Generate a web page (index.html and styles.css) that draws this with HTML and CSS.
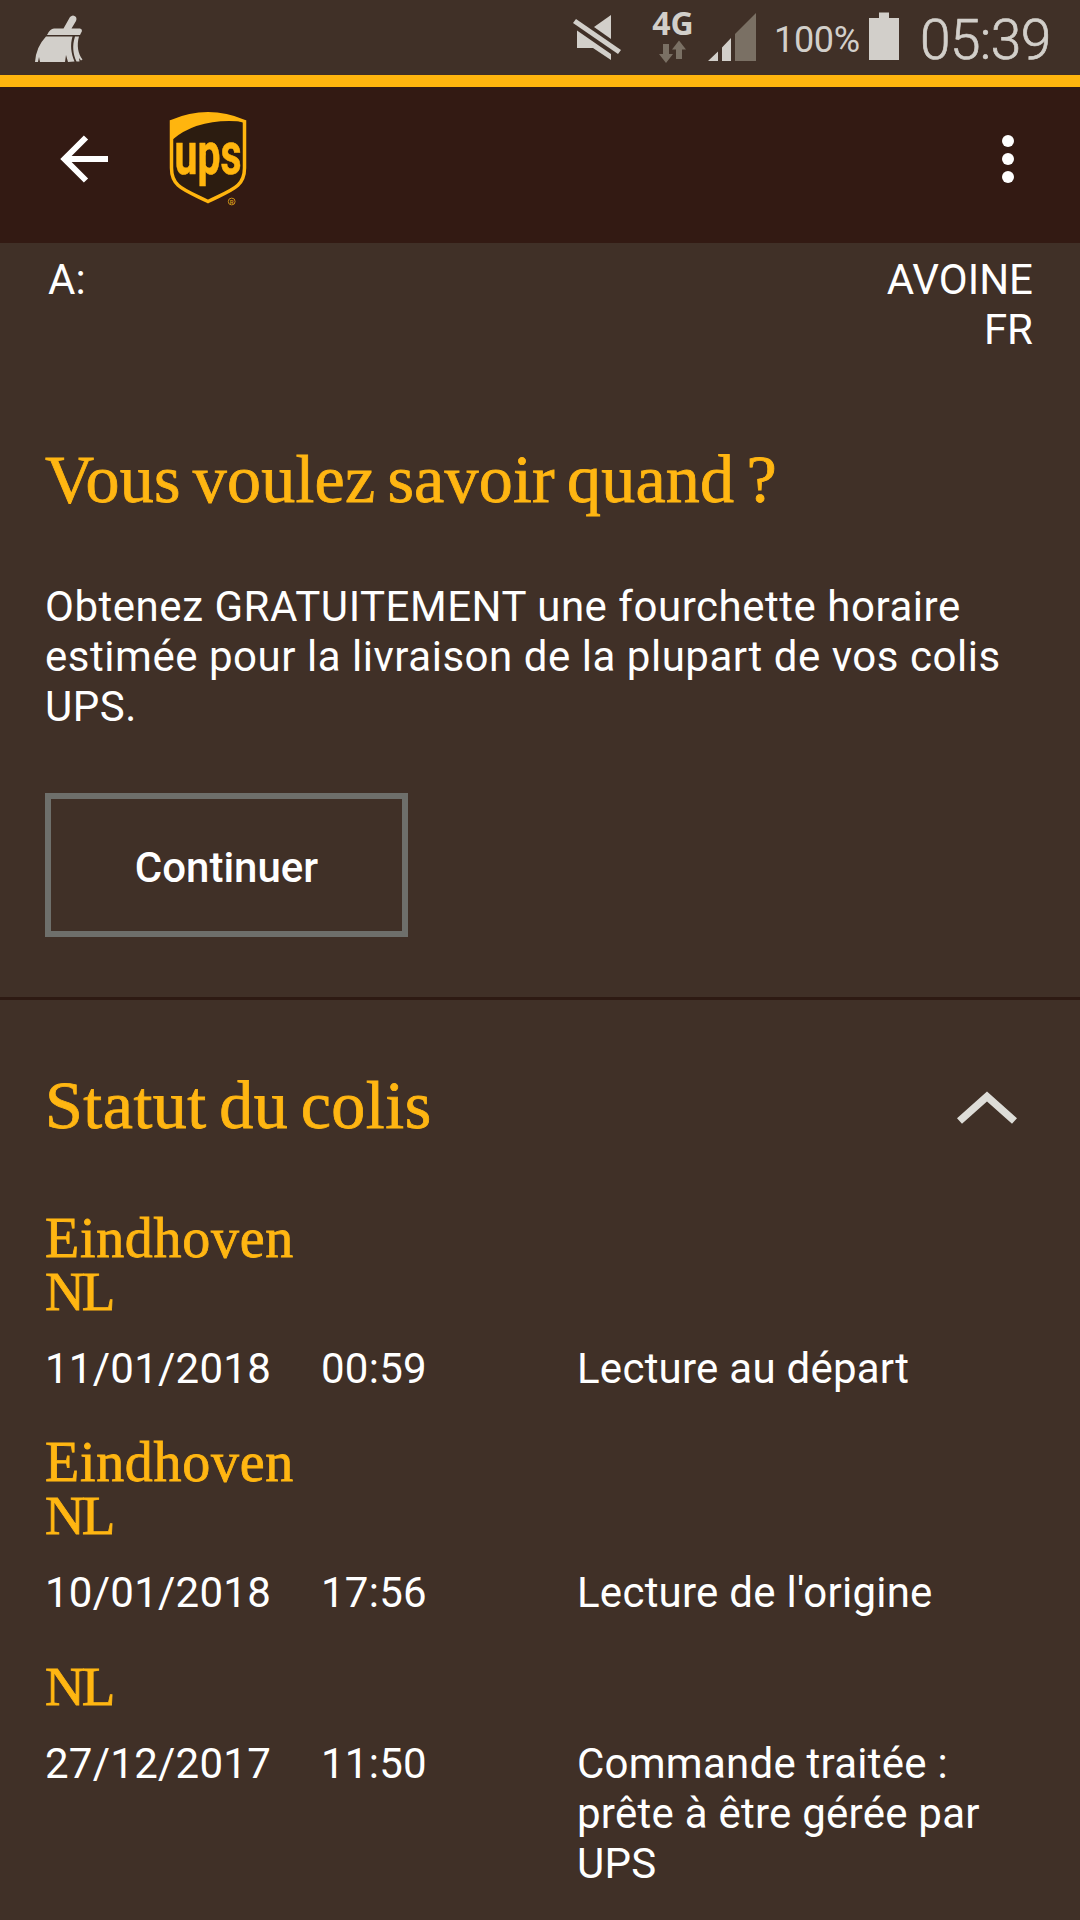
FILE: index.html
```
<!DOCTYPE html>
<html lang="fr">
<head>
  <meta charset="UTF-8" />
  <meta name="viewport" content="width=device-width, initial-scale=1.0"/>
  <title>Suivi UPS</title>
  <link rel="stylesheet" href="styles.css">
</head>
<body>
  <!-- Status bar -->
  <div class="status-bar">
    <svg class="broom" width="50" height="75" viewBox="34 0 50 75" fill="#d2cfca">
      <path d="M63.500 28.500 L70 17 Q73 14 76 17 Q77 19 76 21 L71.500 28.500 H80 Q82 28.500 82 31 L80 35 H47 Q50 28.500 54 28.500 Z"/>
      <path d="M46 36.500 H72.500 C70 45 71 53 74.500 61.500 L68 62 L66 55 L65 62 H40 L39 57 L38 62 H35 Q36 47 46 36.500 Z"/>
      <path d="M75 36.500 H79 C76.500 45 78 54 82.500 59.500 L81 60.500 L79 58 L79.500 61.500 H76.500 C73 54 72 46 75 36.500 Z"/>
    </svg>
    <svg class="mute" width="50" height="75" viewBox="572 0 50 75" fill="#d2cfca">
      <path d="M594 27 L611 15 V39 Z"/>
      <path d="M577 30.500 L611 54 V60 L593 48 H577 Z"/>
      <path d="M576 19 L621 50 L618 54 L573 23 Z"/>
    </svg>
    <div class="network">
      <span>4G</span>
      <svg width="28" height="24" viewBox="660 40 28 24" fill="#7a7064">
        <path d="M664 44 H670 V54 H674 L667 63 L660 54 H664 Z"/>
        <path d="M677 59 H683 V49.500 H687 L680 40.500 L673 49.500 H677 Z"/>
      </svg>
    </div>
    <svg class="signal" width="48" height="75" viewBox="708 0 48 75">
      <path d="M708 61 L718 51.500 V61 Z M722 61 V47.500 L731 38 V61 Z" fill="#d2cfca"/>
      <path d="M735 61 V34 L756 13 V61 Z" fill="#7a7064"/>
    </svg>
    <span class="percent">100%</span>
    <svg class="battery" width="30" height="75" viewBox="869 0 30 75" fill="#d2cfca">
      <path d="M869 18 H879 V12.500 H889 V18 H899 V60 H869 Z"/>
    </svg>
    <span class="clock">05:39</span>
  </div>

  <!-- App header -->
  <header>
    <svg class="back" width="48" height="48" viewBox="0 0 48 48" fill="none" stroke="#fff" stroke-width="6">
      <path d="M26 2.500 L4.500 24 L26 45.500 M4.500 24 H48"/>
    </svg>
    <svg class="logo" width="78" height="96" viewBox="169 111 78 96">
      <path d="M171.500 121.500 Q208 106 244.500 121.500 V168 C244.500 187 232 189.500 208 201.500 C184 189.500 171.500 187 171.500 168 Z" fill="#2c1c10" stroke="#ffb50e" stroke-width="3.500"/>
      <path d="M171 121 Q208 105 245 121 V122 Q199 117 172 140 Z" fill="#ffb50e"/>
      <text class="logo-text" x="174.500" y="173.500" textLength="67" lengthAdjust="spacingAndGlyphs">ups</text>
      <circle cx="231.700" cy="201.500" r="3.400" fill="none" stroke="#c98d17" stroke-width="1"/>
      <text class="logo-mark" x="229.700" y="203.800">R</text>
    </svg>
    <svg class="menu" width="12" height="48" viewBox="0 0 12 48" fill="#fff">
      <circle cx="6" cy="6" r="6"/>
      <circle cx="6" cy="24" r="6"/>
      <circle cx="6" cy="42" r="6"/>
    </svg>
  </header>

  <!-- Destination -->
  <div class="destination">
    <span>A:</span>
    <span class="city">AVOINE<br>FR</span>
  </div>

  <!-- Delivery window offer -->
  <section class="offer">
    <h2>Vous voulez savoir quand ?</h2>
    <p>Obtenez GRATUITEMENT une fourchette horaire<br>estimée pour la livraison de la plupart de vos colis<br>UPS.</p>
    <button class="continue-btn">Continuer</button>
  </section>

  <!-- Package status -->
  <section class="status">
    <div class="status-title">
      <h2>Statut du colis</h2>
      <svg class="chevron" width="60" height="34" viewBox="957 1088 60 34" fill="none" stroke="#deddd8" stroke-width="7.500">
        <path d="M959.500 1121 L987 1096.500 L1014.500 1121"/>
      </svg>
    </div>

    <div class="event">
      <h3>Eindhoven<br><span class="country">NL</span></h3>
      <div class="event-row">
        <span>11/01/2018</span>
        <span>00:59</span>
        <span class="label">Lecture au départ</span>
      </div>
    </div>

    <div class="event">
      <h3>Eindhoven<br><span class="country">NL</span></h3>
      <div class="event-row">
        <span>10/01/2018</span>
        <span>17:56</span>
        <span class="label">Lecture de l'origine</span>
      </div>
    </div>

    <div class="event">
      <h3><span class="country">NL</span></h3>
      <div class="event-row">
        <span>27/12/2017</span>
        <span>11:50</span>
        <span class="label">Commande traitée :<br>prête à être gérée par<br>UPS</span>
      </div>
    </div>
  </section>
</body>
</html>
```
FILE: styles.css
```
* {
  box-sizing: border-box;
}

body {
  margin: 0;
  height: 1920px;
  overflow: hidden;
  background-color: #403027;
  color: #fff;
  font-family: Roboto, sans-serif;
  font-size: 42px;
  line-height: 50px;
}

h2, h3, p {
  margin: 0;
}

h2, h3 {
  color: #ffb612;
  font-family: "Liberation Serif", serif;
  font-weight: normal;
  -webkit-text-stroke: 0.8px #ffb612;
}

h2 {
  font-size: 68px;
  line-height: 80px;
  word-spacing: -5px;
  letter-spacing: 0.2px;
  padding-top: 1px;
}

h3 {
  font-size: 56px;
  line-height: 53px;
  letter-spacing: 0.7px;
}

.country {
  font-size: 55px;
  letter-spacing: -3px;
}

.status-bar {
  display: flex;
  height: 87px;
  padding: 0 30px 0 34px;
  border-bottom: 12px solid #ffb50e;
  color: #d2cfca;
}

.mute {
  margin-left: auto;
}

.network {
  display: flex;
  flex-direction: column;
  align-items: center;
  width: 42px;
  margin-left: 30px;
  font-family: "Noto Sans", sans-serif;
  font-size: 32px;
  font-weight: bold;
  line-height: 40px;
  padding-top: 3px;
}

.network svg {
  margin-top: -3px;
}

.signal {
  margin-left: 14px;
}

.percent {
  width: 86px;
  margin-left: 18px;
  padding-top: 15px;
  font-size: 36px;
  letter-spacing: -0.3px;
  white-space: nowrap;
}

.battery {
  margin-left: 9px;
}

.clock {
  width: 130px;
  margin-left: 21px;
  padding-top: 15px;
  font-size: 55px;
  font-weight: 300;
  letter-spacing: -0.6px;
  -webkit-text-stroke: 0.7px #d2cfca;
  white-space: nowrap;
}

header {
  display: flex;
  align-items: center;
  height: 156px;
  padding: 0 66px 0 60px;
  background-color: #331a13;
}

.back, .menu {
  margin-top: -12px;
}

.logo {
  margin: -12px auto 0 61px;
  overflow: visible;
}

.logo-text {
  fill: #ffb50e;
  stroke: #ffb50e;
  stroke-width: 0.6px;
  font-size: 59px;
  font-weight: 700;
}

.logo-mark {
  fill: #c98d17;
  font-size: 6px;
  font-weight: 700;
}

.destination {
  display: flex;
  justify-content: space-between;
  padding: 12px 47px 0 48px;
  height: 195px;
}

.city {
  text-align: right;
}

.offer {
  height: 562px;
  padding: 0 45px;
  border-bottom: 3px solid #2e1a13;
}

.offer p {
  margin: 63px 0 61px;
  letter-spacing: 0.53px;
  white-space: nowrap;
}

.continue-btn {
  display: block;
  width: 363px;
  height: 144px;
  padding: 4px 0 0;
  border: 6px solid #6e6f6b;
  background: none;
  color: #fff;
  font-family: Roboto, sans-serif;
  font-size: 42px;
  font-weight: 500;
}

.status {
  padding: 64px 45px 0;
}

.status-title {
  display: flex;
  justify-content: space-between;
  align-items: center;
  padding-right: 18px;
  margin-bottom: 67px;
}

.status-title h2 {
  letter-spacing: 0.5px;
}

.chevron {
  overflow: visible;
}

.event {
  margin-bottom: 42px;
}

.event-row {
  display: grid;
  grid-template-columns: 276px 256px 1fr;
  margin-top: 26px;
  letter-spacing: 0.25px;
  white-space: nowrap;
}
```
